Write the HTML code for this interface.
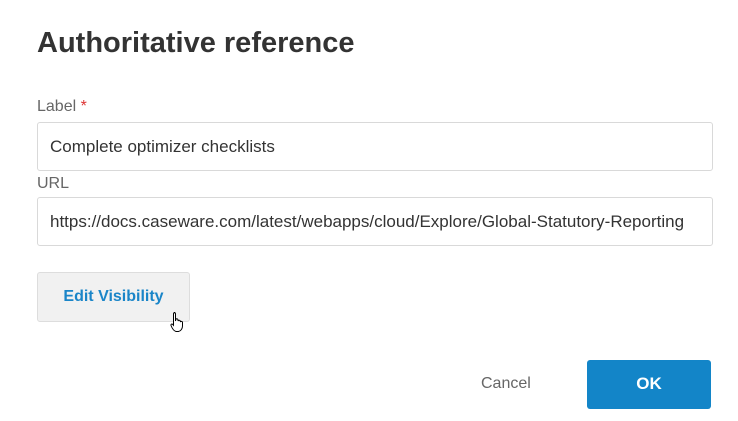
<html><head><style>
body{margin:0;width:738px;height:421px;background:#fff;font-family:"Liberation Sans",sans-serif;position:relative;overflow:hidden}
.a{position:absolute}
.inp{position:absolute;left:37px;height:47px;border:1px solid #d9d9d9;border-radius:3px;font-size:17px;color:#333;line-height:47px;padding-left:12px;width:662px;white-space:nowrap;overflow:hidden}
.lbl{position:absolute;left:37px;font-size:16px;color:#666}
</style></head><body>
<div class="a" style="left:37px;top:27px;font-size:29px;font-weight:bold;color:#333">Authoritative reference</div>
<div class="lbl" style="top:98px">Label <span style="color:#d33">*</span></div>
<div class="inp" style="top:122px">Complete optimizer checklists</div>
<div class="lbl" style="top:175px">URL</div>
<div class="inp" style="top:197px">https://docs.caseware.com/latest/webapps/cloud/Explore/Global-Statutory-Reporting</div>
<div class="a" style="left:37px;top:272px;width:151px;height:48px;background:#f1f1f1;border:1px solid #ddd;border-radius:3px;color:#1a85c8;font-weight:bold;font-size:16px;text-align:center;line-height:48px">Edit Visibility</div>
<svg class="a" style="left:170px;top:311px" width="18" height="22" viewBox="0 0 18 22"><path d="M4 1.5c1 0 1.5.6 1.5 1.5v7l.5-2c1-.5 2 0 2 1v1c.5-1 2-1 2.3 0v1c.5-1 2-.8 2.2.3V15c0 2.5-1.5 5-4 5.5H6C4 20 2 17 1 14.5c-.4-1 .6-2 1.6-1.2l.9 1V3c0-.9.5-1.5 1.5-1.5z" fill="#fff" stroke="#000" stroke-width="1"/></svg>
<div class="a" style="left:481px;top:375px;font-size:16px;color:#666">Cancel</div>
<div class="a" style="left:587px;top:360px;width:124px;height:49px;background:#1385c8;border-radius:3px;color:#fff;font-weight:bold;font-size:17px;text-align:center;line-height:47px">OK</div>
</body></html>
